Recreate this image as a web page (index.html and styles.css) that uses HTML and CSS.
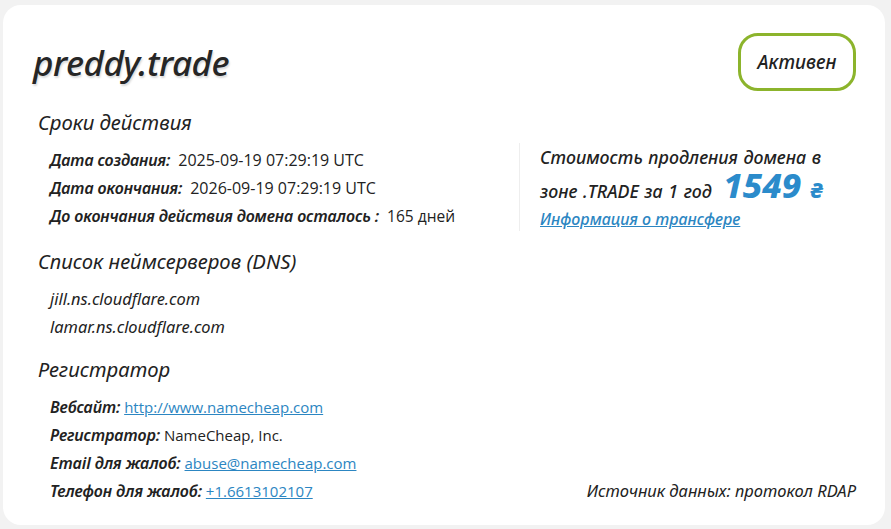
FILE: index.html
```html
<!DOCTYPE html>
<html lang="ru">
<head>
  <meta charset="UTF-8">
  <title>preddy.trade — whois</title>
  <link rel="stylesheet" href="styles.css">
</head>
<body>
<div class="card">
  <div class="card-head">
    <h1 class="domain">preddy.trade</h1>
    <span class="status">Активен</span>
  </div>

  <div class="top-row">
    <div class="col-main">
      <h2 class="section-title">Сроки действия</h2>
      <ul class="info-list dates">
        <li><b>Дата создания:</b><span class="val">2025-09-19 07:29:19 UTC</span></li>
        <li><b>Дата окончания:</b><span class="val">2026-09-19 07:29:19 UTC</span></li>
        <li><b>До окончания действия домена осталось :</b><span class="val days">165 дней</span></li>
      </ul>
    </div>
    <div class="col-price">
      <p class="price-text">Стоимость продления домена в<br>зоне .TRADE за 1 год <span class="price">1549 <small>₴</small></span></p>
      <a class="transfer" href="#">Информация о трансфере</a>
    </div>
  </div>

  <h2 class="section-title dns-title">Список неймсерверов (DNS)</h2>
  <ul class="info-list ns-list">
    <li>jill.ns.cloudflare.com</li>
    <li>lamar.ns.cloudflare.com</li>
  </ul>

  <h2 class="section-title reg-title">Регистратор</h2>
  <div class="reg-row">
    <ul class="info-list">
      <li><b>Вебсайт:</b> <a href="#">http://www.namecheap.com</a></li>
      <li><b>Регистратор:</b> NameCheap, Inc.</li>
      <li><b>Email для жалоб:</b> <a href="#">abuse@namecheap.com</a></li>
      <li><b>Телефон для жалоб:</b> <a href="#">+1.6613102107</a></li>
    </ul>
    <span class="source">Источник данных: протокол RDAP</span>
  </div>
</div>
</body>
</html>
```

FILE: styles.css
```css
body {
  margin: 0;
  background-color: #f2f2f2;
  font-family: "Open Sans", "Noto Sans", Arial, sans-serif;
  color: #222;
}

.card {
  margin: 5px 6px 4px 3px;
  height: 520px;
  box-sizing: border-box;
  padding: 28px 29px 0 30px;
  background-color: #fff;
  border-radius: 18px;
}

.card-head {
  display: flex;
  justify-content: space-between;
  align-items: center;
}

.domain {
  margin: 0;
  font-family: "Noto Sans", sans-serif;
  font-style: italic;
  font-weight: 500;
  font-size: 35px;
  letter-spacing: -0.5px;
  color: #262626;
  text-shadow: 1px 2px 2px rgba(0, 0, 0, 0.15);
}

.status {
  display: inline-flex;
  align-items: center;
  justify-content: center;
  box-sizing: border-box;
  width: 118px;
  height: 58px;
  border: 3px solid #8cb42c;
  border-radius: 20px;
  font-family: "Noto Sans", sans-serif;
  font-style: italic;
  font-weight: 500;
  font-size: 19px;
  color: #222;
}

.section-title {
  margin: 17px 0 0 5px;
  font-family: "Noto Sans", sans-serif;
  font-style: italic;
  font-weight: 400;
  font-size: 20.3px;
  line-height: 28px;
  color: #222;
}

.dns-title {
  margin-top: 16px;
}

.reg-title {
  margin-top: 14px;
}

.info-list {
  list-style: none;
  margin: 10px 0 0;
  padding: 0 0 0 17px;
  font-size: 15px;
  line-height: 28px;
}

.info-list b {
  font-family: "Noto Sans", sans-serif;
  font-style: italic;
  font-weight: 600;
  font-size: 16px;
  letter-spacing: -0.1px;
}

.info-list a {
  color: #2c86c2;
}

/* даты чуть крупнее остальных значений */
.dates .val {
  margin-left: 8px;
  font-size: 16px;
}

.dates .days {
  font-size: 15.5px;
}

.ns-list {
  margin-top: 10px;
  font-family: "Noto Sans", sans-serif;
  font-style: italic;
  font-size: 16.4px;
}

.top-row {
  display: flex;
}

.col-main {
  width: 486px;
}

.col-price {
  margin-top: 52px;
  height: 88px;
  padding-left: 20px;
  border-left: 1px solid #eee;
}

.price-text {
  margin: 0;
  font-family: "Noto Sans", sans-serif;
  font-style: italic;
  font-weight: 500;
  font-size: 17.8px;
  line-height: 28px;
  word-spacing: 1px;
}

.price {
  display: inline-block;
  height: 28px;
  margin-left: 6px;
  font-weight: 800;
  font-size: 34.5px;
  line-height: 28px;
  word-spacing: 0;
  color: #2b8bcb;
}

.price small {
  font-size: 22px;
}

.transfer {
  display: block;
  margin-top: 3px;
  font-family: "Noto Sans", sans-serif;
  font-style: italic;
  font-weight: 500;
  font-size: 16px;
  color: #2c86c2;
}

.reg-row {
  display: flex;
  justify-content: space-between;
  align-items: flex-end;
}

.source {
  font-family: "Noto Sans", sans-serif;
  font-style: italic;
  font-size: 16.5px;
  line-height: 28px;
  color: #222;
}
```
